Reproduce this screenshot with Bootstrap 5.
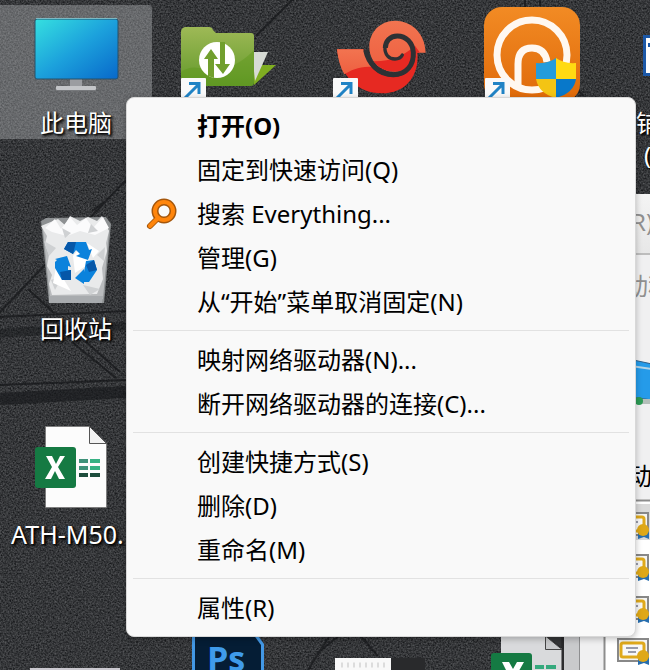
<!DOCTYPE html>
<html lang="zh-CN">
<head>
<meta charset="utf-8">
<meta name="viewport" content="width=device-width, initial-scale=1">
<title>桌面</title>
<link href="https://cdn.jsdelivr.net/npm/bootstrap@5.3.0/dist/css/bootstrap.min.css" rel="stylesheet">
<style>
  body { font-family: "Noto Sans", "Noto Sans CJK SC", sans-serif; font-size: 24px; background: #2f3134; }
  .desktop { min-height: 100vh; }
  .wallpaper { inset: 0; }

  /* desktop shortcuts */
  .shortcut { width: 152px; height: 134px; line-height: 32px; color: #fff; text-shadow: 1px 1px 2px #000, 2px 2px 3px #000; white-space: nowrap; }
  .shortcut:hover { color: #fff; }
  .shortcut svg { display: block; }
  .shortcut.selected { background: rgba(190, 192, 194, .37); border-radius: 0 4px 4px 0; }
  .at-pc { left: 0; top: 5px; }
  .at-bin { left: 0; top: 211px; }
  .at-sheet { left: 0; top: 416px; }
  .file-label { padding-left: 11px; font-size: 25px; }
  .at-folder { left: 152px; top: 5px; }
  .at-snail { left: 304px; top: 5px; }
  .at-orange { left: 456px; top: 5px; }
  .at-word { left: 636px; top: 5px; }
  .at-bottom { left: 0; top: 636px; }

  /* window behind the menu */
  .back-window { left: 564px; top: 194px; right: 0; bottom: 0; background: #f0f0f1; }
  .clip-text { line-height: 32px; white-space: nowrap; }
  .clip-r { top: 12px; left: 67px; color: #909090; }
  .clip-prog { top: 76px; left: 60px; color: #909090; }
  .clip-black { top: 266px; left: 64px; color: #000; }

  /* context menu */
  .context-menu { left: 126px; top: 97px; width: 510px; padding: 6px 0; background: #f9f9f9; border: 1px solid #d8d8d8; border-radius: 8px; font-size: 24px; box-shadow: 0 2px 6px rgba(0, 0, 0, .25); }
  .context-menu .dropdown-item { height: 44px; line-height: 44px; padding: 0 24px 0 18px; color: #000; }
  .glyph-slot { width: 34px; height: 34px; margin-right: 18px; }
  .context-menu .dropdown-divider { margin: 6px 6px 7px; border-color: #e2e2e2; opacity: 1; }
</style>
</head>
<body>
<main class="desktop position-relative overflow-hidden">
  <svg class="wallpaper position-absolute w-100 h-100" aria-hidden="true">
    <defs>
      <filter id="grain" x="0" y="0" width="100%" height="100%" color-interpolation-filters="sRGB">
        <feTurbulence type="fractalNoise" baseFrequency="0.6" numOctaves="2" seed="7"/>
        <feColorMatrix values="0.36 0 0 0 0.03  0.36 0 0 0 0.036  0.36 0 0 0 0.046  0 0 0 0 1"/>
      </filter>
    </defs>
    <rect width="100%" height="100%" filter="url(#grain)"/>
    <g fill="none" stroke="#17181b" stroke-opacity=".75" stroke-width="2">
      <path d="M126 180L0 312M28 289l26 24M92 211l12-9M0 317l126-6M72 342l44 36M86 342l34 30M0 385l126-5"/>
      <path stroke-width="12" stroke-opacity=".65" d="M0 399l126-7"/>
      <path stroke-width="9" stroke-opacity=".45" d="M0 333l126-7"/>
      <path d="M292 0l-36 36M525 0v8M540 0v6M636 240l14 8M584 96l-8-8M340 635l-20 16M360 635l17 20M330 635l-22 35"/>
    </g>
  </svg>

  <a href="#" class="shortcut selected at-pc position-absolute text-decoration-none text-center">
    <svg width="152" height="102" viewBox="0 5 152 102" aria-hidden="true">
      <defs><linearGradient id="screen" x1="0" y1="0" x2="1" y2="1"><stop offset="0" stop-color="#35e0e0"/><stop offset=".5" stop-color="#1ca1dc"/><stop offset="1" stop-color="#0868ca"/></linearGradient></defs>
      <path fill="#9b9da1" d="M70 78h12v10H70z"/><rect x="56" y="86" width="40" height="4" rx="1" fill="#c3c5c8"/><path d="M56 90.500h40" stroke="#77797c"/>
      <rect x="35" y="19" width="83" height="60" rx="2" fill="url(#screen)" stroke="#265069"/><path d="M36 18.500h81" stroke="#7bb9c4"/>
    </svg>
    此电脑
  </a>

  <a href="#" class="shortcut at-bin position-absolute text-decoration-none text-center">
    <svg width="152" height="102" viewBox="0 211 152 102" aria-hidden="true">
      <path fill="#8d9092" d="M41 221l5-3 60-1 5 7-7 79H49z"/>
      <path fill="#b9bbbd" d="M43 230h66l-6 69H50z"/>
      <path fill="#e9eaeb" d="M41 226l17-7 7 6 5-9 10 5 8-4 9 4 5-5 7 15-3 12 1 8-5 17 1 11-6 15-45 1-3-11 3-9-5-9 2-11-4-11 2-8z"/>
      <path fill="#fbfbfc" d="M45 228l10-9 6 10 9-12 7 8 9-7 7 10 10-11 6 11-14 7-15-4-13 5-15-4z"/>
      <path fill="#cfd1d3" d="M44 241l12 7-7 8zM105 247l-8 8 7 6zM51 280l12-5-8 15zM83 285l17 4-10 6zM62 228l9 5-6 5zM91 224l7 7-10 2z"/>
      <path fill="#fff" d="M56 267l15 24-18-8zM87 243l12 8-6 7zM73 256l5-6 14 12-17 11z"/>
      <path fill="#a8abae" d="M49 296h54l-1 7H49z"/>
      <path fill="#0b82dc" d="M68 242h18l3 8 3-1-4 11-12-4 4-2-4-4-3 4-9-5zM55 262l2-2-2-1 12-3 4 11-3-1v4h3v10h-9l-7-12zM86 261l8-1 3 10-8 12h-5v2l-9-6 9-9v3z"/>
      <path fill="#0657a8" d="M68 242h8l-3 12-9-5zM60 272l11-2v10h-9zM86 265l8-5 3 10-8 2z"/>
    </svg>
    回收站
  </a>

  <a href="#" class="shortcut at-sheet position-absolute text-decoration-none">
    <svg width="152" height="102" viewBox="0 416 152 102" aria-hidden="true">
      <path fill="#fcfcfc" stroke="#777" stroke-width=".8" d="M45.500 426.500h44l17 17v64h-61z"/><path fill="#f2f2f2" stroke="#555" d="M89.500 426.500v17h17z"/>
      <rect x="35" y="447" width="41" height="41" rx="3" fill="#157a43"/><path fill="#fff" d="M46 456h6l4 8 4-8h5l-7 11 7 12h-6l-4-8-4 8h-6l7-12z"/>
      <path fill="#3e9179" d="M79 459h9v4h-9zM79 466h9v4h-9z"/><path fill="#37b184" d="M90 459h10v4H90zM90 466h10v4H90z"/><path fill="#1d4d3c" d="M79 473h9v4h-9zM90 473h10v4H90z"/>
    </svg>
    <span class="file-label">ATH-M50.</span>
  </a>

  <a href="#" class="shortcut at-folder position-absolute" aria-label="文件同步">
    <svg width="152" height="102" viewBox="152 5 152 102" aria-hidden="true">
      <defs><linearGradient id="leaf" x1="0" y1="0" x2="0" y2="1"><stop offset="0" stop-color="#9eb956"/><stop offset="1" stop-color="#62992a"/></linearGradient></defs>
      <path fill="#7fad21" d="M253 65h23l-22 20z"/><path fill="#d7dbd5" d="M252 52h16l-13 29z"/>
      <path fill="url(#leaf)" d="M181 32q0-4 4-5h24q3 0 4 3l3 3h35q3 0 3 3v46q0 4-4 4h-69z"/>
      <path fill="#5e961b" opacity=".45" d="M181 72q8-6 18-4 30 8 55-18v33q0 3-3 3h-70z"/>
      <circle cx="217" cy="60" r="18" fill="#fff"/>
      <path fill="#719f2e" d="M208 76V59h-4l7-10 7 10h-4v19zM220 42h5v22h5l-7 10-8-10h5z"/>
      <g id="arrow-badge"><rect x="181" y="78" width="25" height="25" rx="1" fill="#f9f9f9"/><path fill="none" stroke="#2083c5" stroke-width="3" d="M189 83.500h10V94M199 84l-14 14"/></g>
    </svg>
  </a>

  <a href="#" class="shortcut at-snail position-absolute" aria-label="红色海螺">
    <svg width="152" height="102" viewBox="304 5 152 102" aria-hidden="true">
      <defs>
        <linearGradient id="shell" x1="0" y1="0" x2="0" y2="1"><stop offset="0" stop-color="#f27450"/><stop offset="1" stop-color="#ee5f40"/></linearGradient>
        <clipPath id="head"><path d="M332 158C330 95 285 62 240 62c-45 0-77 35-77 78s32 75 77 75c35 0 60-20 66-57z"/></clipPath>
      </defs>
      <g transform="translate(315 0) scale(.3333)">
        <path fill="#e62922" d="M66 148h79c8 45 40 82 90 82 40 0 60-25 60-60l12-12c6 70-35 122-107 122-75 0-124-55-134-132z"/>
        <path fill="url(#shell)" d="M66 148h79c4 20 14 38 28 53-36-4-66 10-85 22-12-20-19-45-22-75z"/>
        <path fill="url(#shell)" d="M332 158C330 95 285 62 240 62c-45 0-77 35-77 78s32 75 77 75c35 0 60-20 66-57z"/>
        <path clip-path="url(#head)" fill="#e62922" d="M165 183c55 4 100-14 135-46l14 20-20 60H190z"/>
        <path fill="none" stroke="#2e3134" stroke-width="15" d="M152 150c8 40 38 74 83 74 40 0 62-30 60-67-2-29-22-49-48-49-22 0-36 16-36 36"/>
        <path fill="none" stroke="#2e3134" stroke-width="10" stroke-linecap="round" d="M210 140c-2 24 12 37 30 37 12 0 19-6 22-12"/>
      </g>
      <use href="#arrow-badge" x="152"/>
    </svg>
  </a>

  <a href="#" class="shortcut at-orange position-absolute" aria-label="应用程序">
    <svg width="152" height="102" viewBox="456 5 152 102" aria-hidden="true">
      <defs><linearGradient id="amber" x1="0" y1="0" x2="0" y2="1"><stop offset="0" stop-color="#f28b24"/><stop offset="1" stop-color="#df6909"/></linearGradient></defs>
      <rect x="484" y="7" width="96" height="95" rx="18" fill="url(#amber)"/>
      <circle cx="532" cy="55" r="35" fill="none" stroke="#fff8f0" stroke-width="7"/>
      <path fill="none" stroke="#fff8f0" stroke-width="7" d="M518 85V64q0-16 14-16 13 0 15 14"/>
      <path fill="#ffda12" d="M556 58q8 6 20 5v16h-20z"/><path fill="#249cdb" d="M556 58q-8 6-20 5v16h20z"/>
      <path fill="#f4c414" d="M536 79h20v19q-17-4-20-19z"/><path fill="#0878ca" d="M556 79h20q-2 14-20 19z"/>
      <use href="#arrow-badge" x="304"/>
    </svg>
  </a>

  <a href="#" class="shortcut at-word position-absolute text-decoration-none">
    <svg width="152" height="102" viewBox="636 5 152 102" aria-hidden="true"><path fill="#1c58a7" d="M643 35h45v41h-45z"/><path fill="#fff" d="M646 38h40v35h-40z"/><path fill="#1c58a7" d="M648 43h10v4h-10z"/></svg>
    铺货<br><span class="ms-2">(1)</span>
  </a>

  <svg class="at-bottom position-absolute" width="564" height="34" viewBox="0 636 564 34" aria-label="Photoshop" role="img">
    <path fill="#4398e5" d="M192 630h62l10 14v40h-72z"/><path fill="#051d35" d="M195 630h55l11 15v40h-66z"/>
    <text x="207" y="671" font-size="34" font-weight="700" fill="#3f9bea" font-family="Open Sans, Noto Sans, sans-serif">Ps</text>
    <path fill="#cbc9d0" d="M30 668h90v2H30z"/><path fill="#f8f8f8" d="M335 658h56v12h-56z"/><path stroke="#dcdcdc" stroke-width="5" stroke-dasharray="2 4" d="M341 665h44"/><path fill="#292a2c" d="M391 658h34v12h-34z"/>
    <path fill="#d9dadc" d="M501 630h44v18h17v24h-61z"/><path fill="#343537" stroke="#242527" d="M545 636h18v13zM562 636h2v34h-2z"/><path fill="#c8c9cb" stroke="#444" d="M545.500 636v13.500H562z"/>
    <rect x="491" y="653" width="41" height="41" rx="3" fill="#157a43"/><path fill="#fff" d="M502 662h7l4 7 4-7h7l-8 14h-7z"/><path fill="#35a97d" d="M535 665h9v4h-9zM546 665h10v4h-10z"/>
  </svg>

  <section class="back-window position-absolute overflow-hidden" aria-label="后台窗口">
    <svg class="position-absolute w-100 h-100" aria-hidden="true">
      <defs>
        <linearGradient id="bar" x1="0" y1="0" x2="0" y2="1"><stop offset="0" stop-color="#f4f4f4"/><stop offset="1" stop-color="#e7e7e7"/></linearGradient>
        <g id="certificate">
          <rect x="54" y="2" width="30" height="22" fill="#f4f4f2" stroke="#888" stroke-width="2"/><rect x="57" y="6" width="23" height="14" rx="2" fill="#f8f8f8" stroke="#dfa91b" stroke-width="3"/><path stroke="#999caa" stroke-width="2" d="M62 11h12M64 15h8"/>
          <path fill="#286eae" d="M74 20h11v8l-5-2-6 2z"/><circle cx="79" cy="19" r="6" fill="#dfa817"/>
        </g>
      </defs>
      <rect width="100%" height="60" fill="url(#bar)"/><path stroke="#bdbdbd" stroke-width="2" d="M0 60h100"/>
      <path fill="#fff" d="M41 306h60v180H41z"/><path fill="#dadada" d="M69 310h32v36H69z"/><path stroke="#8d8d8d" stroke-width="2" d="M41 306.500h60M40.500 306v180"/>
      <path fill="#c9cacc" d="M0 440h15v40H0z"/><path stroke="#8d8e90" d="M15.500 440v40"/>
      <path fill="#259be9" stroke="#315f87" d="M60 164l28 6v36l-28-4z"/><path stroke="#b6d4e4" stroke-width="2" d="M60 171l28 4"/>
      <path fill="#b4bfba" d="M65 205h25v5H65z"/><circle cx="75" cy="207" r="4" fill="#2c9b55"/>
      <use href="#certificate" y="317"/><use href="#certificate" y="359"/><use href="#certificate" y="401"/><use href="#certificate" y="443"/>
    </svg>
    <span class="clip-text clip-r position-absolute">R)</span>
    <span class="clip-text clip-prog position-absolute">动程</span>
    <span class="clip-text clip-black position-absolute">动</span>
  </section>

  <div class="context-menu dropdown-menu show position-absolute" role="menu">
    <button type="button" role="menuitem" class="dropdown-item d-flex align-items-center fw-bold"><span class="glyph-slot"></span>打开(O)</button>
    <button type="button" role="menuitem" class="dropdown-item d-flex align-items-center"><span class="glyph-slot"></span>固定到快速访问(Q)</button>
    <button type="button" role="menuitem" class="dropdown-item d-flex align-items-center">
      <svg class="glyph-slot" viewBox="0 0 34 34" aria-hidden="true"><g fill="none" stroke-linecap="round"><path stroke="#a4560b" stroke-width="6" d="M5 29l8-8"/><circle cx="19" cy="14" r="9" stroke="#a4560b" stroke-width="7"/><circle cx="19" cy="14" r="9" stroke="#ff850b" stroke-width="4"/><path stroke="#ff850b" stroke-width="4" d="M5 29l8-8"/></g></svg>搜索 Everything...</button>
    <button type="button" role="menuitem" class="dropdown-item d-flex align-items-center"><span class="glyph-slot"></span>管理(G)</button>
    <button type="button" role="menuitem" class="dropdown-item d-flex align-items-center"><span class="glyph-slot"></span>从“开始”菜单取消固定(N)</button>
    <hr class="dropdown-divider">
    <button type="button" role="menuitem" class="dropdown-item d-flex align-items-center"><span class="glyph-slot"></span>映射网络驱动器(N)...</button>
    <button type="button" role="menuitem" class="dropdown-item d-flex align-items-center"><span class="glyph-slot"></span>断开网络驱动器的连接(C)...</button>
    <hr class="dropdown-divider">
    <button type="button" role="menuitem" class="dropdown-item d-flex align-items-center"><span class="glyph-slot"></span>创建快捷方式(S)</button>
    <button type="button" role="menuitem" class="dropdown-item d-flex align-items-center"><span class="glyph-slot"></span>删除(D)</button>
    <button type="button" role="menuitem" class="dropdown-item d-flex align-items-center"><span class="glyph-slot"></span>重命名(M)</button>
    <hr class="dropdown-divider">
    <button type="button" role="menuitem" class="dropdown-item d-flex align-items-center"><span class="glyph-slot"></span>属性(R)</button>
  </div>
</main>
<script src="https://cdn.jsdelivr.net/npm/bootstrap@5.3.0/dist/js/bootstrap.bundle.min.js"></script>
</body>
</html>
